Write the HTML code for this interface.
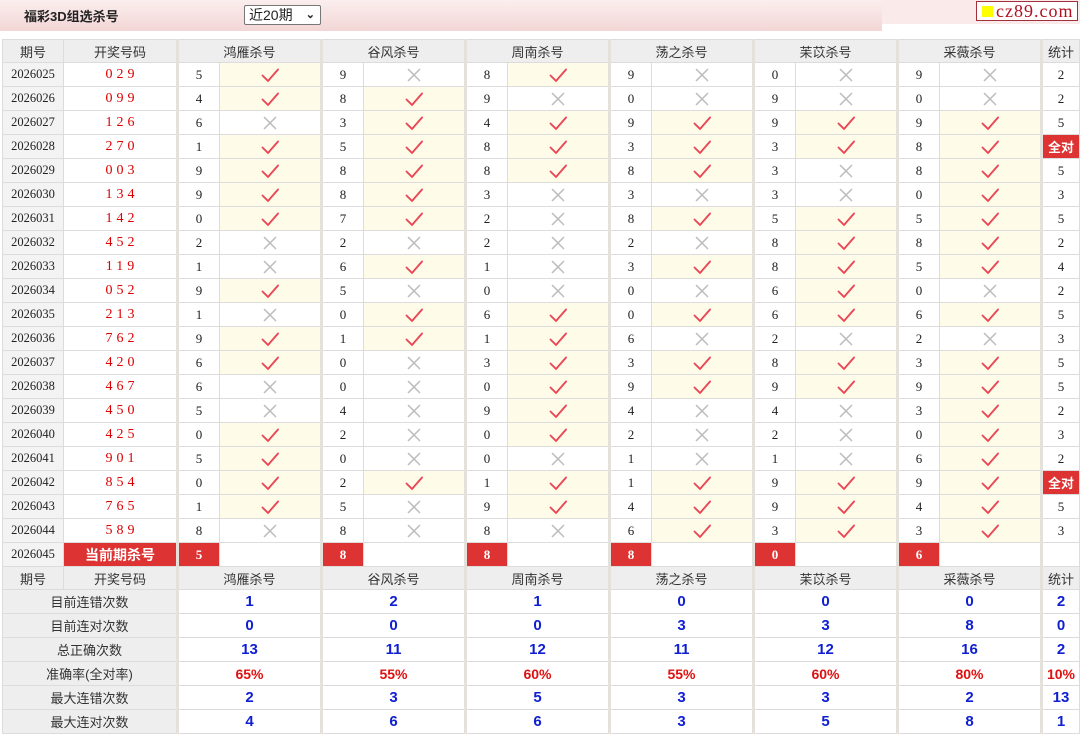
<!DOCTYPE html>
<html><head><meta charset="utf-8">
<style>
*{margin:0;padding:0;box-sizing:border-box}
body{width:1080px;height:730px;overflow:hidden;background:#fff;font-family:"Liberation Sans","Noto Sans CJK SC",sans-serif;font-size:13px;color:#222;position:relative}
.hdr{position:absolute;left:0;top:0;width:882px;height:31px;background:linear-gradient(#fbeeee,#f3d6d6);}
.hdr2{position:absolute;left:882px;top:0;width:198px;height:24px;background:#fbeaea}
.title{position:absolute;left:24px;top:6px;font-weight:bold;font-size:13px;color:#222}
.sel{position:absolute;left:244px;top:5px;width:77px;height:20px;border:1px solid #777;border-radius:2px;background:#fff;font-size:14px;padding-left:4px;line-height:18px}
.sel b{position:absolute;right:5px;top:0;font-size:11px}
.logo{position:absolute;left:976px;top:1px;width:102px;height:20px;border:1px solid #a0303a;background:#fff;font-family:"Liberation Serif",serif;font-size:18px;color:#b01020;line-height:18px;padding-left:19px;letter-spacing:1px;white-space:nowrap;overflow:hidden}
.logo i{position:absolute;left:5px;top:4px;width:11px;height:11px;background:#ff0}
table{position:absolute;left:2px;top:39px;border-collapse:collapse;table-layout:fixed}
td{border:1px solid #dcdcdc;height:24px;text-align:center;padding:0;font-family:"Liberation Serif",serif;font-size:13px;white-space:nowrap;overflow:hidden}
td.g{border-left:3px solid #e4e1da}
tr.h td{background:#eee;font-family:"Liberation Sans","Noto Sans CJK SC",sans-serif;height:23px;color:#333}
td.p{background:#f3f3f3;font-size:12.5px}
td.num{color:#d00;letter-spacing:4px;font-size:14px;padding-left:4px}
td.y{background:#fefbe8}
td.r{background:#d33;color:#fff;font-weight:bold}
td.cur{background:#d33;color:#fff;font-weight:bold;font-family:"Liberation Sans","Noto Sans CJK SC",sans-serif;font-size:14px}
td.lab{background:#eee;font-family:"Liberation Sans","Noto Sans CJK SC",sans-serif;color:#333}
td.v{color:#1020d0;font-weight:bold;font-family:"Liberation Sans",sans-serif;font-size:15px}
td.pc{color:#e01010;font-weight:bold;font-family:"Liberation Sans",sans-serif;font-size:14px}
td.all{background:#d33;color:#fff;font-weight:bold;font-family:"Liberation Sans","Noto Sans CJK SC",sans-serif;font-size:13px}
svg{display:block;margin:0 auto}
</style></head><body>
<svg width="0" height="0" style="position:absolute"><defs>
<symbol id="ok" viewBox="0 0 20 16"><path d="M2.5 8.5 L8 14 L18 2.5" fill="none" stroke="#ec4656" stroke-width="1.9" stroke-linecap="round" stroke-linejoin="round"/></symbol>
<symbol id="no" viewBox="0 0 16 16"><path d="M2 2 L14 14 M14 2 L2 14" fill="none" stroke="#bbb" stroke-width="1.5"/></symbol>
</defs></svg>
<div class="hdr"></div><div class="hdr2"></div>
<div class="title">福彩3D组选杀号</div>
<div class="sel">近20期<b>&#8964;</b></div>
<div class="logo"><i></i>cz89.com</div>
<table>
<colgroup><col style="width:61px"><col style="width:114px"><col style="width:42px"><col style="width:102px"><col style="width:42px"><col style="width:102px"><col style="width:42px"><col style="width:102px"><col style="width:42px"><col style="width:102px"><col style="width:42px"><col style="width:102px"><col style="width:42px"><col style="width:102px"><col style="width:38px"></colgroup>
<tr class="h"><td>期号</td><td>开奖号码</td><td class="g" colspan="2">鸿雁杀号</td><td class="g" colspan="2">谷风杀号</td><td class="g" colspan="2">周南杀号</td><td class="g" colspan="2">荡之杀号</td><td class="g" colspan="2">苿苡杀号</td><td class="g" colspan="2">采薇杀号</td><td class="g">统计</td></tr>
<tr><td class="p">2026025</td><td class="num">029</td><td class="g">5</td><td class="y"><svg width="20" height="16"><use href="#ok"/></svg></td><td class="g">9</td><td><svg width="16" height="16"><use href="#no"/></svg></td><td class="g">8</td><td class="y"><svg width="20" height="16"><use href="#ok"/></svg></td><td class="g">9</td><td><svg width="16" height="16"><use href="#no"/></svg></td><td class="g">0</td><td><svg width="16" height="16"><use href="#no"/></svg></td><td class="g">9</td><td><svg width="16" height="16"><use href="#no"/></svg></td><td class="g">2</td></tr>
<tr><td class="p">2026026</td><td class="num">099</td><td class="g">4</td><td class="y"><svg width="20" height="16"><use href="#ok"/></svg></td><td class="g">8</td><td class="y"><svg width="20" height="16"><use href="#ok"/></svg></td><td class="g">9</td><td><svg width="16" height="16"><use href="#no"/></svg></td><td class="g">0</td><td><svg width="16" height="16"><use href="#no"/></svg></td><td class="g">9</td><td><svg width="16" height="16"><use href="#no"/></svg></td><td class="g">0</td><td><svg width="16" height="16"><use href="#no"/></svg></td><td class="g">2</td></tr>
<tr><td class="p">2026027</td><td class="num">126</td><td class="g">6</td><td><svg width="16" height="16"><use href="#no"/></svg></td><td class="g">3</td><td class="y"><svg width="20" height="16"><use href="#ok"/></svg></td><td class="g">4</td><td class="y"><svg width="20" height="16"><use href="#ok"/></svg></td><td class="g">9</td><td class="y"><svg width="20" height="16"><use href="#ok"/></svg></td><td class="g">9</td><td class="y"><svg width="20" height="16"><use href="#ok"/></svg></td><td class="g">9</td><td class="y"><svg width="20" height="16"><use href="#ok"/></svg></td><td class="g">5</td></tr>
<tr><td class="p">2026028</td><td class="num">270</td><td class="g">1</td><td class="y"><svg width="20" height="16"><use href="#ok"/></svg></td><td class="g">5</td><td class="y"><svg width="20" height="16"><use href="#ok"/></svg></td><td class="g">8</td><td class="y"><svg width="20" height="16"><use href="#ok"/></svg></td><td class="g">3</td><td class="y"><svg width="20" height="16"><use href="#ok"/></svg></td><td class="g">3</td><td class="y"><svg width="20" height="16"><use href="#ok"/></svg></td><td class="g">8</td><td class="y"><svg width="20" height="16"><use href="#ok"/></svg></td><td class="g all">全对</td></tr>
<tr><td class="p">2026029</td><td class="num">003</td><td class="g">9</td><td class="y"><svg width="20" height="16"><use href="#ok"/></svg></td><td class="g">8</td><td class="y"><svg width="20" height="16"><use href="#ok"/></svg></td><td class="g">8</td><td class="y"><svg width="20" height="16"><use href="#ok"/></svg></td><td class="g">8</td><td class="y"><svg width="20" height="16"><use href="#ok"/></svg></td><td class="g">3</td><td><svg width="16" height="16"><use href="#no"/></svg></td><td class="g">8</td><td class="y"><svg width="20" height="16"><use href="#ok"/></svg></td><td class="g">5</td></tr>
<tr><td class="p">2026030</td><td class="num">134</td><td class="g">9</td><td class="y"><svg width="20" height="16"><use href="#ok"/></svg></td><td class="g">8</td><td class="y"><svg width="20" height="16"><use href="#ok"/></svg></td><td class="g">3</td><td><svg width="16" height="16"><use href="#no"/></svg></td><td class="g">3</td><td><svg width="16" height="16"><use href="#no"/></svg></td><td class="g">3</td><td><svg width="16" height="16"><use href="#no"/></svg></td><td class="g">0</td><td class="y"><svg width="20" height="16"><use href="#ok"/></svg></td><td class="g">3</td></tr>
<tr><td class="p">2026031</td><td class="num">142</td><td class="g">0</td><td class="y"><svg width="20" height="16"><use href="#ok"/></svg></td><td class="g">7</td><td class="y"><svg width="20" height="16"><use href="#ok"/></svg></td><td class="g">2</td><td><svg width="16" height="16"><use href="#no"/></svg></td><td class="g">8</td><td class="y"><svg width="20" height="16"><use href="#ok"/></svg></td><td class="g">5</td><td class="y"><svg width="20" height="16"><use href="#ok"/></svg></td><td class="g">5</td><td class="y"><svg width="20" height="16"><use href="#ok"/></svg></td><td class="g">5</td></tr>
<tr><td class="p">2026032</td><td class="num">452</td><td class="g">2</td><td><svg width="16" height="16"><use href="#no"/></svg></td><td class="g">2</td><td><svg width="16" height="16"><use href="#no"/></svg></td><td class="g">2</td><td><svg width="16" height="16"><use href="#no"/></svg></td><td class="g">2</td><td><svg width="16" height="16"><use href="#no"/></svg></td><td class="g">8</td><td class="y"><svg width="20" height="16"><use href="#ok"/></svg></td><td class="g">8</td><td class="y"><svg width="20" height="16"><use href="#ok"/></svg></td><td class="g">2</td></tr>
<tr><td class="p">2026033</td><td class="num">119</td><td class="g">1</td><td><svg width="16" height="16"><use href="#no"/></svg></td><td class="g">6</td><td class="y"><svg width="20" height="16"><use href="#ok"/></svg></td><td class="g">1</td><td><svg width="16" height="16"><use href="#no"/></svg></td><td class="g">3</td><td class="y"><svg width="20" height="16"><use href="#ok"/></svg></td><td class="g">8</td><td class="y"><svg width="20" height="16"><use href="#ok"/></svg></td><td class="g">5</td><td class="y"><svg width="20" height="16"><use href="#ok"/></svg></td><td class="g">4</td></tr>
<tr><td class="p">2026034</td><td class="num">052</td><td class="g">9</td><td class="y"><svg width="20" height="16"><use href="#ok"/></svg></td><td class="g">5</td><td><svg width="16" height="16"><use href="#no"/></svg></td><td class="g">0</td><td><svg width="16" height="16"><use href="#no"/></svg></td><td class="g">0</td><td><svg width="16" height="16"><use href="#no"/></svg></td><td class="g">6</td><td class="y"><svg width="20" height="16"><use href="#ok"/></svg></td><td class="g">0</td><td><svg width="16" height="16"><use href="#no"/></svg></td><td class="g">2</td></tr>
<tr><td class="p">2026035</td><td class="num">213</td><td class="g">1</td><td><svg width="16" height="16"><use href="#no"/></svg></td><td class="g">0</td><td class="y"><svg width="20" height="16"><use href="#ok"/></svg></td><td class="g">6</td><td class="y"><svg width="20" height="16"><use href="#ok"/></svg></td><td class="g">0</td><td class="y"><svg width="20" height="16"><use href="#ok"/></svg></td><td class="g">6</td><td class="y"><svg width="20" height="16"><use href="#ok"/></svg></td><td class="g">6</td><td class="y"><svg width="20" height="16"><use href="#ok"/></svg></td><td class="g">5</td></tr>
<tr><td class="p">2026036</td><td class="num">762</td><td class="g">9</td><td class="y"><svg width="20" height="16"><use href="#ok"/></svg></td><td class="g">1</td><td class="y"><svg width="20" height="16"><use href="#ok"/></svg></td><td class="g">1</td><td class="y"><svg width="20" height="16"><use href="#ok"/></svg></td><td class="g">6</td><td><svg width="16" height="16"><use href="#no"/></svg></td><td class="g">2</td><td><svg width="16" height="16"><use href="#no"/></svg></td><td class="g">2</td><td><svg width="16" height="16"><use href="#no"/></svg></td><td class="g">3</td></tr>
<tr><td class="p">2026037</td><td class="num">420</td><td class="g">6</td><td class="y"><svg width="20" height="16"><use href="#ok"/></svg></td><td class="g">0</td><td><svg width="16" height="16"><use href="#no"/></svg></td><td class="g">3</td><td class="y"><svg width="20" height="16"><use href="#ok"/></svg></td><td class="g">3</td><td class="y"><svg width="20" height="16"><use href="#ok"/></svg></td><td class="g">8</td><td class="y"><svg width="20" height="16"><use href="#ok"/></svg></td><td class="g">3</td><td class="y"><svg width="20" height="16"><use href="#ok"/></svg></td><td class="g">5</td></tr>
<tr><td class="p">2026038</td><td class="num">467</td><td class="g">6</td><td><svg width="16" height="16"><use href="#no"/></svg></td><td class="g">0</td><td><svg width="16" height="16"><use href="#no"/></svg></td><td class="g">0</td><td class="y"><svg width="20" height="16"><use href="#ok"/></svg></td><td class="g">9</td><td class="y"><svg width="20" height="16"><use href="#ok"/></svg></td><td class="g">9</td><td class="y"><svg width="20" height="16"><use href="#ok"/></svg></td><td class="g">9</td><td class="y"><svg width="20" height="16"><use href="#ok"/></svg></td><td class="g">5</td></tr>
<tr><td class="p">2026039</td><td class="num">450</td><td class="g">5</td><td><svg width="16" height="16"><use href="#no"/></svg></td><td class="g">4</td><td><svg width="16" height="16"><use href="#no"/></svg></td><td class="g">9</td><td class="y"><svg width="20" height="16"><use href="#ok"/></svg></td><td class="g">4</td><td><svg width="16" height="16"><use href="#no"/></svg></td><td class="g">4</td><td><svg width="16" height="16"><use href="#no"/></svg></td><td class="g">3</td><td class="y"><svg width="20" height="16"><use href="#ok"/></svg></td><td class="g">2</td></tr>
<tr><td class="p">2026040</td><td class="num">425</td><td class="g">0</td><td class="y"><svg width="20" height="16"><use href="#ok"/></svg></td><td class="g">2</td><td><svg width="16" height="16"><use href="#no"/></svg></td><td class="g">0</td><td class="y"><svg width="20" height="16"><use href="#ok"/></svg></td><td class="g">2</td><td><svg width="16" height="16"><use href="#no"/></svg></td><td class="g">2</td><td><svg width="16" height="16"><use href="#no"/></svg></td><td class="g">0</td><td class="y"><svg width="20" height="16"><use href="#ok"/></svg></td><td class="g">3</td></tr>
<tr><td class="p">2026041</td><td class="num">901</td><td class="g">5</td><td class="y"><svg width="20" height="16"><use href="#ok"/></svg></td><td class="g">0</td><td><svg width="16" height="16"><use href="#no"/></svg></td><td class="g">0</td><td><svg width="16" height="16"><use href="#no"/></svg></td><td class="g">1</td><td><svg width="16" height="16"><use href="#no"/></svg></td><td class="g">1</td><td><svg width="16" height="16"><use href="#no"/></svg></td><td class="g">6</td><td class="y"><svg width="20" height="16"><use href="#ok"/></svg></td><td class="g">2</td></tr>
<tr><td class="p">2026042</td><td class="num">854</td><td class="g">0</td><td class="y"><svg width="20" height="16"><use href="#ok"/></svg></td><td class="g">2</td><td class="y"><svg width="20" height="16"><use href="#ok"/></svg></td><td class="g">1</td><td class="y"><svg width="20" height="16"><use href="#ok"/></svg></td><td class="g">1</td><td class="y"><svg width="20" height="16"><use href="#ok"/></svg></td><td class="g">9</td><td class="y"><svg width="20" height="16"><use href="#ok"/></svg></td><td class="g">9</td><td class="y"><svg width="20" height="16"><use href="#ok"/></svg></td><td class="g all">全对</td></tr>
<tr><td class="p">2026043</td><td class="num">765</td><td class="g">1</td><td class="y"><svg width="20" height="16"><use href="#ok"/></svg></td><td class="g">5</td><td><svg width="16" height="16"><use href="#no"/></svg></td><td class="g">9</td><td class="y"><svg width="20" height="16"><use href="#ok"/></svg></td><td class="g">4</td><td class="y"><svg width="20" height="16"><use href="#ok"/></svg></td><td class="g">9</td><td class="y"><svg width="20" height="16"><use href="#ok"/></svg></td><td class="g">4</td><td class="y"><svg width="20" height="16"><use href="#ok"/></svg></td><td class="g">5</td></tr>
<tr><td class="p">2026044</td><td class="num">589</td><td class="g">8</td><td><svg width="16" height="16"><use href="#no"/></svg></td><td class="g">8</td><td><svg width="16" height="16"><use href="#no"/></svg></td><td class="g">8</td><td><svg width="16" height="16"><use href="#no"/></svg></td><td class="g">6</td><td class="y"><svg width="20" height="16"><use href="#ok"/></svg></td><td class="g">3</td><td class="y"><svg width="20" height="16"><use href="#ok"/></svg></td><td class="g">3</td><td class="y"><svg width="20" height="16"><use href="#ok"/></svg></td><td class="g">3</td></tr>
<tr><td class="p">2026045</td><td class="cur">当前期杀号</td><td class="g r">5</td><td></td><td class="g r">8</td><td></td><td class="g r">8</td><td></td><td class="g r">8</td><td></td><td class="g r">0</td><td></td><td class="g r">6</td><td></td><td class="g"></td></tr>
<tr class="h"><td>期号</td><td>开奖号码</td><td class="g" colspan="2">鸿雁杀号</td><td class="g" colspan="2">谷风杀号</td><td class="g" colspan="2">周南杀号</td><td class="g" colspan="2">荡之杀号</td><td class="g" colspan="2">苿苡杀号</td><td class="g" colspan="2">采薇杀号</td><td class="g">统计</td></tr>
<tr><td class="lab" colspan="2">目前连错次数</td><td class="g v" colspan="2">1</td><td class="g v" colspan="2">2</td><td class="g v" colspan="2">1</td><td class="g v" colspan="2">0</td><td class="g v" colspan="2">0</td><td class="g v" colspan="2">0</td><td class="g v">2</td></tr>
<tr><td class="lab" colspan="2">目前连对次数</td><td class="g v" colspan="2">0</td><td class="g v" colspan="2">0</td><td class="g v" colspan="2">0</td><td class="g v" colspan="2">3</td><td class="g v" colspan="2">3</td><td class="g v" colspan="2">8</td><td class="g v">0</td></tr>
<tr><td class="lab" colspan="2">总正确次数</td><td class="g v" colspan="2">13</td><td class="g v" colspan="2">11</td><td class="g v" colspan="2">12</td><td class="g v" colspan="2">11</td><td class="g v" colspan="2">12</td><td class="g v" colspan="2">16</td><td class="g v">2</td></tr>
<tr><td class="lab" colspan="2">准确率(全对率)</td><td class="g pc" colspan="2">65%</td><td class="g pc" colspan="2">55%</td><td class="g pc" colspan="2">60%</td><td class="g pc" colspan="2">55%</td><td class="g pc" colspan="2">60%</td><td class="g pc" colspan="2">80%</td><td class="g pc">10%</td></tr>
<tr><td class="lab" colspan="2">最大连错次数</td><td class="g v" colspan="2">2</td><td class="g v" colspan="2">3</td><td class="g v" colspan="2">5</td><td class="g v" colspan="2">3</td><td class="g v" colspan="2">3</td><td class="g v" colspan="2">2</td><td class="g v">13</td></tr>
<tr><td class="lab" colspan="2">最大连对次数</td><td class="g v" colspan="2">4</td><td class="g v" colspan="2">6</td><td class="g v" colspan="2">6</td><td class="g v" colspan="2">3</td><td class="g v" colspan="2">5</td><td class="g v" colspan="2">8</td><td class="g v">1</td></tr>
</table>
</body></html>
